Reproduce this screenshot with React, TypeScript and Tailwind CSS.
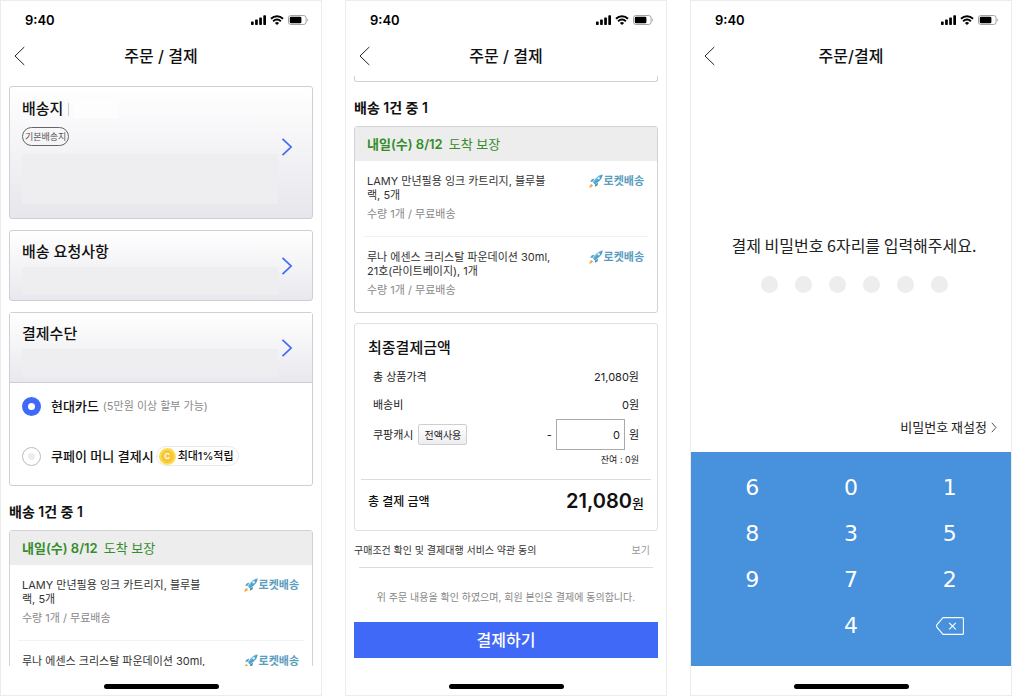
import type { ReactNode } from "react";

function StatusBar() {
  return (
    <div className="flex h-[38px] shrink-0 items-center justify-between pr-3 pl-6">
      <span className="text-[13px] leading-4 font-semibold text-black">9:40</span>
      <div className="flex items-center gap-1">
        <svg width="15" height="10" viewBox="0 0 15 10" aria-hidden="true">
          <rect x="0" y="6.4" width="2.7" height="3.6" rx="0.7" />
          <rect x="4.1" y="4.6" width="2.7" height="5.4" rx="0.7" />
          <rect x="8.2" y="2.4" width="2.7" height="7.6" rx="0.7" />
          <rect x="12.3" y="0.2" width="2.7" height="9.8" rx="0.7" />
        </svg>
        <svg width="14" height="10" viewBox="0 0 14 10" fill="none" stroke="#000" strokeWidth="1.9" aria-hidden="true">
          <path d="M1 3.7C4.4 0.4 9.6 0.4 13 3.7" />
          <path d="M3.1 6.2C5.4 4.1 8.6 4.1 10.9 6.2" />
          <path d="M4.9 7.9C6.2 6.8 7.8 6.8 9.1 7.9L7 10Z" fill="#000" stroke="none" />
        </svg>
        <svg width="21" height="10" viewBox="0 0 21 10" aria-hidden="true">
          <rect x="0.5" y="0.5" width="17.6" height="9" rx="2.4" fill="none" stroke="#a3a3a3" />
          <rect x="1.8" y="1.8" width="11.6" height="6.4" rx="1.2" />
          <path d="M19.3 3.4C20.6 4 20.6 6 19.3 6.6Z" fill="#a3a3a3" />
        </svg>
      </div>
    </div>
  );
}

function Phone({ title, children }: { title: string; children: ReactNode }) {
  return (
    <section className="flex h-full min-w-0 flex-col overflow-hidden border border-[#ececec] bg-white">
      <StatusBar />
      <header className="grid h-[37px] shrink-0 grid-cols-[40px_1fr_40px] items-center pb-[3px]">
        <button type="button" aria-label="뒤로" className="flex h-full items-center pl-3">
          <svg width="13" height="20" viewBox="0 0 13 20" fill="none" stroke="#222" strokeWidth="1" aria-hidden="true">
            <path d="M11.3 1L2 10L11.3 19" />
          </svg>
        </button>
        <h1 className="text-center text-[16px] leading-6 font-medium text-[#111]">{title}</h1>
      </header>
      <div className="flex min-h-0 flex-1 flex-col overflow-y-auto [scrollbar-width:none]">{children}</div>
      <div className="flex h-[29px] shrink-0 items-end justify-center pb-[6px]">
        <div className="h-[5px] w-[115px] rounded-full bg-black" />
      </div>
    </section>
  );
}

function BlueChevron() {
  return (
    <svg width="12" height="20" viewBox="0 0 12 20" fill="none" stroke="#4169f7" strokeWidth="1.7" aria-hidden="true">
      <path d="M1.5 1.8L10.1 10L1.5 18.2" />
    </svg>
  );
}

function RocketBadge() {
  return (
    <span className="flex shrink-0 items-center gap-px text-[11px] leading-[14px] font-bold text-[#5a9dbe]">
      <svg width="14" height="14" viewBox="0 0 14 14" aria-hidden="true">
        <path d="M5.4 4.6L2.6 5.5L1.2 8L4 7.6Z" fill="#4d9fc6" />
        <path d="M9.2 8.8L8.4 11.4L5.8 12.8L6.2 10.2Z" fill="#3f8fb8" />
        <path d="M13.6 0.4C10.4 0.6 7.4 2.6 3.8 8.2L5.8 10.2C11.2 6.8 13.2 4 13.6 0.4Z" fill="#6cbbdc" />
        <path d="M13.6 0.4C11 1.6 7.8 4.6 4.8 9.2L5.8 10.2C11.2 6.8 13.2 4 13.6 0.4Z" fill="#4fa3ca" />
        <circle cx="9.7" cy="4.3" r="1.2" fill="#d9f0fa" />
        <path d="M2.6 10C1.4 10.4 0.6 11.8 0.3 13.7C2.2 13.4 3.6 12.6 4 11.4Z" fill="#f5a945" />
      </svg>
      로켓배송
    </span>
  );
}

const products = [
  { name: ["LAMY 만년필용 잉크 카트리지, 블루블", "랙, 5개"], info: "수량 1개 / 무료배송" },
  { name: ["루나 에센스 크리스탈 파운데이션 30ml,", "21호(라이트베이지), 1개"], info: "수량 1개 / 무료배송" },
];

function Delivery() {
  return (
    <section className="shrink-0">
      <h2 className="pt-[15px] pb-[7px] text-[14px] leading-[22px] font-semibold text-[#111]">배송 1건 중 1</h2>
      <div className="rounded-[3px] border border-[#d2d2d4]">
        <p className="flex h-[34px] items-center gap-[6px] bg-[#ededed] px-3 text-[13px] leading-5 text-[#358c2b]">
          <strong className="font-semibold">내일(수) 8/12</strong>
          <span>도착 보장</span>
        </p>
        <ul className="divide-y divide-[#f3f3f3] px-2">
          {products.map((product) => (
            <li key={product.name[0]} className="flex items-start justify-between pt-[13px] pr-[5px] pb-[14px] pl-1">
              <div>
                <p className="text-[11px] leading-[14px] whitespace-nowrap text-[#333]">
                  {product.name[0]}
                  <br />
                  {product.name[1]}
                </p>
                <p className="mt-1 text-[11px] leading-4 text-[#888]">{product.info}</p>
              </div>
              <RocketBadge />
            </li>
          ))}
        </ul>
      </div>
    </section>
  );
}

function OrderScreen() {
  return (
    <Phone title="주문 / 결제">
      <div className="flex flex-col px-2 pt-[10px]">
        <button
          type="button"
          className="flex items-center gap-[3px] rounded-[3px] border border-[#cfcfd3] bg-linear-to-b from-white to-[#e7e6ec] pt-[11px] pr-[19px] pb-[14px] pl-3 text-left"
        >
          <span className="flex flex-1 flex-col items-start">
            <span className="flex items-center text-[15px] leading-[22px] font-medium text-[#111]">
              배송지
              <span className="ml-[5px] h-[13px] w-px bg-[#ccc]" />
              <span className="ml-1 h-[18px] w-[45px] bg-white/60" />
            </span>
            <span className="mt-[7px] flex h-[19px] items-center rounded-full border border-[#666] px-[2px] text-[9px] leading-3 text-[#555]">
              기본배송지
            </span>
            <span className="mt-2 h-[50px] w-full bg-[#eeeef0]" />
          </span>
          <span className="pt-1 pb-3">
            <BlueChevron />
          </span>
        </button>

        <button
          type="button"
          className="mt-[11px] flex items-center gap-[3px] rounded-[3px] border border-[#cfcfd3] bg-linear-to-b from-white to-[#e9e8ee] pt-[10px] pr-[19px] pb-[5px] pl-3 text-left"
        >
          <span className="flex flex-1 flex-col">
            <span className="text-[15px] leading-[22px] font-medium text-[#111]">배송 요청사항</span>
            <span className="mt-1 h-7 w-full bg-[#eeeef0]" />
          </span>
          <span className="pb-[5px]">
            <BlueChevron />
          </span>
        </button>

        <section className="mt-[11px] rounded-[3px] border border-[#cfcfd3]">
          <button
            type="button"
            className="flex w-full items-center gap-[3px] border-b border-[#cfcfd3] bg-linear-to-b from-white to-[#e9e8ee] pt-[10px] pr-[19px] pb-[5px] pl-3 text-left"
          >
            <span className="flex flex-1 flex-col">
              <span className="text-[15px] leading-[22px] font-medium text-[#111]">결제수단</span>
              <span className="mt-1 h-7 w-full bg-[#eeeef0]" />
            </span>
            <span className="pb-[5px]">
              <BlueChevron />
            </span>
          </button>
          <div className="flex flex-col gap-1 px-3 pb-[6px]">
            <label className="flex h-[46px] items-center">
              <input
                type="radio"
                name="payment"
                defaultChecked
                className="size-[19px] appearance-none rounded-full border border-[#bbb] bg-[radial-gradient(circle,#ececec_0_3px,#fff_4px)] checked:border-[6px] checked:border-[#4169f7] checked:bg-white checked:bg-none"
              />
              <span className="ml-[10px] text-[13px] leading-5 font-medium text-[#111]">현대카드</span>
              <span className="ml-1 text-[11px] leading-5 text-[#8a8a8a]">(5만원 이상 할부 가능)</span>
            </label>
            <label className="flex h-[46px] items-center">
              <input
                type="radio"
                name="payment"
                className="size-[19px] appearance-none rounded-full border border-[#bbb] bg-[radial-gradient(circle,#ececec_0_3px,#fff_4px)] checked:border-[6px] checked:border-[#4169f7] checked:bg-white checked:bg-none"
              />
              <span className="ml-[10px] text-[13px] leading-5 font-medium text-[#111]">쿠페이 머니 결제시</span>
              <span className="ml-[2px] flex h-5 items-center gap-[2px] rounded-full border border-[#e8e8e8] pr-1 pl-[2px] text-[11px] leading-4 font-medium text-[#111]">
                <span className="flex size-[17px] items-center justify-center rounded-full border-2 border-[#fbdf4c] bg-[#f7c63c] text-[8px] leading-none font-bold text-[#fffbe8]">
                  C
                </span>
                최대1%적립
              </span>
            </label>
          </div>
        </section>

        <Delivery />
      </div>
    </Phone>
  );
}

function ConfirmScreen() {
  return (
    <Phone title="주문 / 결제">
      <div className="flex flex-col px-2">
        <div className="h-[6px] rounded-b-[3px] border-x border-b border-[#d2d2d4]" />
        <Delivery />

        <section className="mt-[10px] rounded-[3px] border border-[#dfdfe1] px-[6px] pt-[14px] pb-[6px]">
          <h2 className="px-[7px] text-[15px] leading-5 font-medium text-[#111]">최종결제금액</h2>
          <dl className="mt-[5px] pr-3 pl-3 text-[11px] leading-4 text-[#222]">
            <div className="flex h-7 items-center justify-between">
              <dt>총 상품가격</dt>
              <dd>21,080원</dd>
            </div>
            <div className="flex h-7 items-center justify-between">
              <dt>배송비</dt>
              <dd>0원</dd>
            </div>
            <div className="flex items-center justify-between">
              <dt className="flex items-center gap-[5px]">
                <label htmlFor="cash">쿠팡캐시</label>
                <button
                  type="button"
                  className="flex h-[21px] items-center rounded-[2px] border border-[#cfcfd3] bg-linear-to-b from-white to-[#ededf1] px-[5px] text-[10px] leading-4"
                >
                  전액사용
                </button>
              </dt>
              <dd className="flex items-center gap-1">
                <span>-</span>
                <input
                  id="cash"
                  type="text"
                  inputMode="numeric"
                  defaultValue="0"
                  className="h-[31px] w-[69px] border border-[#aaa] pr-1 text-right text-[11px]"
                />
                <span>원</span>
              </dd>
            </div>
          </dl>
          <p className="h-5 pr-3 text-right text-[9px] leading-5 text-[#222]">잔여 : 0원</p>
          <div className="mt-[9px] flex h-[45px] items-center justify-between border-t border-[#dcdcdc] px-[7px] text-[#111]">
            <span className="text-[12px] leading-4 font-medium">총 결제 금액</span>
            <span className="text-[20px] leading-7 font-semibold">
              21,080<span className="text-[13px] font-medium">원</span>
            </span>
          </div>
        </section>

        <div className="flex h-9 items-center justify-between pt-[2px] pr-2 text-[10px] leading-4">
          <span className="text-[#333]">구매조건 확인 및 결제대행 서비스 약관 동의</span>
          <a href="#terms" className="text-[#999]">
            보기
          </a>
        </div>
        <hr className="mx-[5px] border-[#dcdcdc]" />
        <p className="pt-5 text-center text-[10px] leading-[18px] text-[#888]">
          위 주문 내용을 확인 하였으며, 회원 본인은 결제에 동의합니다.
        </p>
        <button type="button" className="mt-4 h-9 bg-[#4169f7] text-[16px] leading-6 font-medium text-white">
          결제하기
        </button>
      </div>
    </Phone>
  );
}

const keys = ["6", "0", "1", "8", "3", "5", "9", "7", "2", "", "4"];

function PasswordScreen() {
  return (
    <Phone title="주문/결제">
      <div className="flex flex-1 flex-col items-center justify-center pt-12 pl-[6px] font-['Noto_Sans_CJK_KR',sans-serif]">
        <h2 className="text-[16px] leading-6 text-[#222]">결제 비밀번호 6자리를 입력해주세요.</h2>
        <div className="mt-[19px] flex gap-[17px]" role="img" aria-label="0 / 6">
          {[1, 2, 3, 4, 5, 6].map((n) => (
            <span key={n} className="size-[17px] rounded-full bg-[#ededed]" />
          ))}
        </div>
      </div>
      <div className="flex h-[50px] items-center justify-end pr-[14px]">
        <a
          href="#reset"
          className="flex items-center gap-1 font-['Noto_Sans_CJK_KR',sans-serif] text-[13px] leading-5 text-[#222]"
        >
          비밀번호 재설정
          <svg width="6" height="11" viewBox="0 0 6 11" fill="none" stroke="#555" aria-hidden="true">
            <path d="M0.8 0.8L5 5.5L0.8 10.2" />
          </svg>
        </a>
      </div>
      <div className="grid shrink-0 grid-cols-3 bg-[#4791dd] px-3 pt-[13px] pb-[17px] font-['DejaVu_Sans',sans-serif] text-[22px] leading-7 text-white">
        {keys.map((key, i) =>
          key ? (
            <button key={i} type="button" className="h-[46px]">
              {key}
            </button>
          ) : (
            <span key={i} />
          ),
        )}
        <button type="button" aria-label="지우기" className="flex h-[46px] items-center justify-center">
          <svg width="28" height="18" viewBox="0 0 28 18" fill="none" stroke="#fff" strokeWidth="1.1" aria-hidden="true">
            <path d="M7 0.6H26.4Q27.4 0.6 27.4 1.6V16.4Q27.4 17.4 26.4 17.4H7L1 10.4Q0.2 9 1 7.6Z" />
            <path d="M13.2 5.8L19.8 12.4M19.8 5.8L13.2 12.4" />
          </svg>
        </button>
      </div>
    </Phone>
  );
}

export default function App() {
  return (
    <main className="grid h-screen grid-cols-3 gap-[23px] bg-white font-['Inter','Noto_Sans_CJK_KR',sans-serif]">
      <OrderScreen />
      <ConfirmScreen />
      <PasswordScreen />
    </main>
  );
}
